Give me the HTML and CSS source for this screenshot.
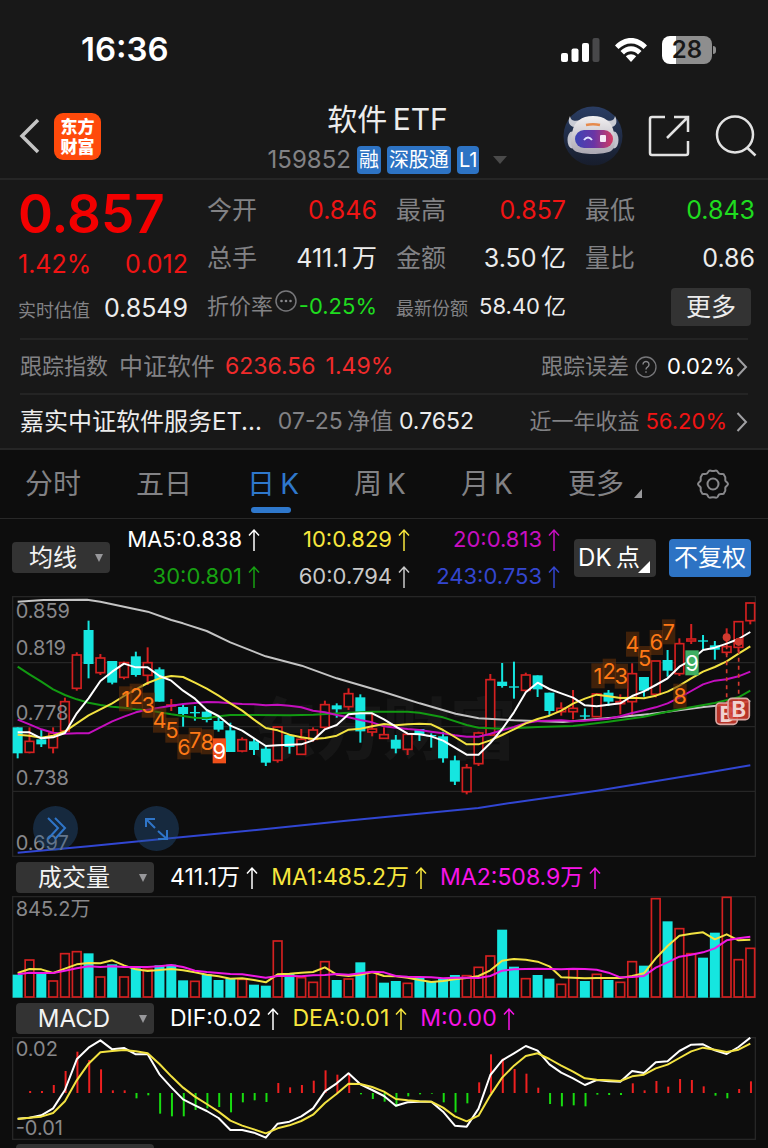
FILE: index.html
```html
<!DOCTYPE html>
<html lang="zh-CN">
<head>
<meta charset="utf-8">
<meta name="viewport" content="width=device-width, initial-scale=1">
<title>软件ETF 159852</title>
<link rel="stylesheet" href="styles.css">
</head>
<body>
<svg class="defs" aria-hidden="true">
  <symbol id="up" viewBox="0 0 12 24"><path d="M6 23V2M1 7.500L6 2l5 5.500" fill="none" stroke="currentColor" stroke-width="1.500"/></symbol>
  <symbol id="chevron" viewBox="0 0 12 22"><path d="M1.500 2L10 11l-8.500 9" fill="none" stroke="currentColor" stroke-width="2"/></symbol>
</svg>

<div class="top">
  <div class="status">
    <time>16:36</time>
    <div class="status-icons">
      <svg width="40" height="26" viewBox="0 0 40 26" aria-label="信号">
        <rect x="1" y="16" width="7" height="9" rx="2" fill="#fff"/><rect x="11.500" y="11.500" width="7" height="13.500" rx="2" fill="#fff"/><rect x="22" y="6" width="7" height="19" rx="2" fill="#fff"/><rect x="32.500" y="1" width="7" height="24" rx="2" fill="#48484a"/>
      </svg>
      <svg width="34" height="26" viewBox="0 0 34 26" aria-label="无线网络">
        <path d="M1 8.500C10 -1.500 24 -1.500 33 8.500L29.500 12C22.500 4.500 11.500 4.500 4.500 12Z" fill="#fff"/>
        <path d="M6.500 14C12.500 7.700 21.500 7.700 27.500 14L24 17.500C20 13.300 14 13.300 10 17.500Z" fill="#fff"/>
        <path d="M11.800 19.300C14.800 16.500 19.200 16.500 22.200 19.300L17 25Z" fill="#fff"/>
      </svg>
      <div class="battery"><span>28</span></div>
    </div>
  </div>

  <header class="header">
    <div class="header-left">
      <button class="icon-btn" aria-label="返回"><svg width="22" height="36" viewBox="0 0 22 36"><path d="M20 2L4 18l16 16" fill="none" stroke="#c4c4c4" stroke-width="3.500"/></svg></button>
      <div class="logo">东方<br>财富</div>
    </div>
    <div class="heading">
      <h1>软件&thinsp;ETF</h1>
      <div class="code-row"><span class="code">159852</span><span class="tag">融</span><span class="tag">深股通</span><span class="tag">L1</span><svg class="code-caret" width="14" height="8" viewBox="0 0 14 8"><path d="M0 0h14L7 8z" fill="#4a4a4a"/></svg></div>
    </div>
    <div class="header-right">
      <button class="icon-btn" aria-label="智能助手">
        <svg width="60" height="60" viewBox="0 0 60 60">
          <defs>
            <linearGradient id="disc" x1="0" y1="0" x2="0" y2="1"><stop offset="0" stop-color="#2a3d63"/><stop offset="1" stop-color="#171d2c"/></linearGradient>
            <linearGradient id="visor"><stop offset="0" stop-color="#3c45b5"/><stop offset=".5" stop-color="#6a35a5"/><stop offset="1" stop-color="#d53b62"/></linearGradient>
            <linearGradient id="shell" x1="0" y1="0" x2="0" y2="1"><stop offset="0" stop-color="#f2f0f1"/><stop offset="1" stop-color="#aaa7b2"/></linearGradient>
          </defs>
          <circle cx="30" cy="30" r="29.500" fill="url(#disc)"/>
          <path d="M15 20C9 23 3 18 7 10c1 6 6 5 11 4zM45 20c6 3 11-2 7-10-1 6-6 5-11 4z" fill="#c9cbd4"/>
          <ellipse cx="9" cy="34" rx="4.500" ry="8.500" fill="#c3c4ce"/><ellipse cx="51" cy="34" rx="4.500" ry="8.500" fill="#c3c4ce"/>
          <path d="M30 10c12 0 18 6 20 13 3 10 3 19-2 22-7 4-29 4-36 0-5-3-5-12-2-22 2-7 8-13 20-13z" fill="url(#shell)"/>
          <path d="M23 19q7-1.500 14 0" fill="none" stroke="#e68a4c" stroke-width="2.500"/>
          <rect x="12" y="24" width="38" height="18" rx="9" fill="url(#visor)"/>
          <path d="M21 34q4-5 8 0" fill="none" stroke="#dfe4ff" stroke-width="2"/>
          <rect x="37" y="29" width="6" height="7" rx="1" fill="#f6e9f5"/>
        </svg>
      </button>
      <button class="icon-btn" aria-label="分享"><svg width="42" height="42" viewBox="0 0 42 42"><path d="M17 2H4a2 2 0 0 0-2 2v34a2 2 0 0 0 2 2h34a2 2 0 0 0 2-2V26M26 2h14v15M40 2L19 23" fill="none" stroke="#e2e2e2" stroke-width="2.500"/></svg></button>
      <button class="icon-btn" aria-label="搜索"><svg width="42" height="42" viewBox="0 0 42 42"><circle cx="20" cy="19.500" r="18" fill="none" stroke="#e2e2e2" stroke-width="2.500"/><path d="M32.500 33l8 7.500" stroke="#e2e2e2" stroke-width="2.500"/></svg></button>
    </div>
  </header>

  <section class="quote">
    <div class="quote-col">
      <div class="price">0.857</div>
      <div class="pair main red"><span>1.42%</span><span>0.012</span></div>
      <div class="pair main"><span class="label small">实时估值</span><span>0.8549</span></div>
    </div>
    <div class="quote-col">
      <div class="pair"><span class="label">今开</span><span class="red">0.846</span></div>
      <div class="pair"><span class="label">总手</span><span>411.1&thinsp;万</span></div>
      <div class="pair"><span class="label mid">折价率<svg class="dots" width="22" height="22" viewBox="0 0 22 22"><circle cx="11" cy="11" r="10" fill="none" stroke="#77777a" stroke-width="1.500"/><circle cx="6.500" cy="11" r="1.300" fill="#88888b"/><circle cx="11" cy="11" r="1.300" fill="#88888b"/><circle cx="15.500" cy="11" r="1.300" fill="#88888b"/></svg></span><span class="green mid">-0.25%</span></div>
    </div>
    <div class="quote-col">
      <div class="pair"><span class="label">最高</span><span class="red">0.857</span></div>
      <div class="pair"><span class="label">金额</span><span>3.50&thinsp;亿</span></div>
      <div class="pair"><span class="label small">最新份额</span><span class="mid">58.40&thinsp;亿</span></div>
    </div>
    <div class="quote-col">
      <div class="pair"><span class="label">最低</span><span class="green">0.843</span></div>
      <div class="pair"><span class="label">量比</span><span>0.86</span></div>
      <div class="pair end"><button class="more">更多</button></div>
    </div>
  </section>

  <a class="line" href="#index">
    <span class="label">跟踪指数</span><span class="label name">中证软件</span><span class="rose num">6236.56</span><span class="rose num">1.49%</span>
    <span class="line-right"><span class="label">跟踪误差</span><svg class="help" width="22" height="22" viewBox="0 0 22 22"><circle cx="11" cy="11" r="10" fill="none" stroke="#77777a" stroke-width="1.300"/><path d="M8 8.500a3 3 0 1 1 4.500 2.600c-1 .6-1.500 1-1.500 2.400M11 15.200v1.600" fill="none" stroke="#88888b" stroke-width="1.400"/></svg><span>0.02%</span><svg class="chev" width="12" height="22"><use href="#chevron"/></svg></span>
  </a>
  <a class="line" href="#fund">
    <span class="name">嘉实中证软件服务ET...</span><span class="label nav">07-25&thinsp;净值</span><span class="nav-value">0.7652</span>
    <span class="line-right"><span class="label">近一年收益</span><span class="red gain">56.20%</span><svg class="chev far" width="12" height="22"><use href="#chevron"/></svg></span>
  </a>
</div>

<nav class="tabs">
  <button>分时</button><button>五日</button><button class="active">日&thinsp;K</button><button>周&thinsp;K</button><button>月&thinsp;K</button>
  <button class="tab-more">更多<svg width="8" height="9" viewBox="0 0 8 9"><path d="M8 0v9H0z" fill="#98989b"/></svg></button>
  <button aria-label="设置"><svg class="gear" width="32" height="32" viewBox="0 0 32 32" fill="none" stroke="#88888b" stroke-width="2"><path d="M11.500 3.500C12.500 1.500 13.500 3 16 3s3.500-1.500 4.500.5l1.500 2c1.500 1 3 .2 4.500.6l1.700 3c.4 1.500-.2 2.200.2 3.600.8 1.300 2.600 2 2.600 3.300s-1.800 2-2.600 3.300c-.4 1.400.2 2.100-.2 3.600l-1.700 3c-1.500.4-3-.4-4.500.6l-1.500 2.500c-1 1.500-2 .3-4.500.3s-3.500 1.200-4.500-.3L10 26.500c-1.500-1-3-.2-4.500-.6l-1.700-3c-.4-1.500.2-2.200-.2-3.600C2.800 18 1 17.300 1 16s1.800-2 2.600-3.300c.4-1.400-.2-2.100.2-3.600l1.700-3C7 5.700 8.500 6.500 10 5.500z"/><circle cx="16" cy="16" r="5.500"/></svg></button>
</nav>

<div class="ma-row">
  <label class="picker overlay-picker"><select aria-label="主图指标"><option>均线</option></select></label>
  <div class="ma-grid">
    <span class="c-white">MA5:0.838<svg class="up"><use href="#up"/></svg></span><span class="c-yellow">10:0.829<svg class="up"><use href="#up"/></svg></span><span class="c-purple">20:0.813<svg class="up"><use href="#up"/></svg></span>
    <span class="c-green">30:0.801<svg class="up"><use href="#up"/></svg></span><span class="c-grey">60:0.794<svg class="up"><use href="#up"/></svg></span><span class="c-blue">243:0.753<svg class="up"><use href="#up"/></svg></span>
  </div>
  <button class="dk">DK&thinsp;点<svg width="12" height="12" viewBox="0 0 12 12"><path d="M12 0v12H0z" fill="#fff"/></svg></button>
  <button class="adjust">不复权</button>
</div>

<main class="charts">
  <div class="chart-box">
    <svg id="kline" class="chart" viewBox="35 3 2232 783" role="img" aria-label="日K线"></svg>
    <div class="chart-tools">
      <button aria-label="展开"><svg width="45" height="45" viewBox="0 0 45 45"><path d="M15 12l10 10-10 11M22 12l10 10-10 11" fill="none" stroke="#2f75c8" stroke-width="2"/></svg></button>
      <button aria-label="全屏"><svg width="45" height="45" viewBox="0 0 45 45"><path d="M21 13h-9v8M12 13l9 9M24 25l9 8M33 24v9h-9" fill="none" stroke="#2f75c8" stroke-width="2"/></svg></button>
    </div>
  </div>
  <div class="panel-head">
    <label class="picker"><select aria-label="副图指标一"><option>成交量</option></select></label>
    <span class="c-white">411.1万<svg class="up"><use href="#up"/></svg></span><span class="c-yellow">MA1:485.2万<svg class="up"><use href="#up"/></svg></span><span class="c-magenta">MA2:508.9万<svg class="up"><use href="#up"/></svg></span>
  </div>
  <svg id="volume" class="chart" viewBox="35 108 2232 306" role="img" aria-label="成交量"></svg>
  <div class="panel-head">
    <label class="picker"><select aria-label="副图指标二"><option>MACD</option></select></label>
    <span class="c-white">DIF:0.02<svg class="up"><use href="#up"/></svg></span><span class="c-yellow">DEA:0.01<svg class="up"><use href="#up"/></svg></span><span class="c-magenta">M:0.00<svg class="up"><use href="#up"/></svg></span>
  </div>
  <svg id="macd" class="chart" viewBox="35 531 2232 309" role="img" aria-label="MACD"></svg>
  <div class="next-panel"></div>
</main>
<script src="chart.js"></script>
</body>
</html>
```

FILE: styles.css
```css
* { box-sizing: border-box; }
body {
  margin: 0;
  background: #0d0d0d;
  color: #ececec;
  font-family: Inter, "Noto Sans CJK SC", sans-serif;
  font-size: 22px;
  line-height: 1.25;
}
button, select { font: inherit; color: inherit; border: 0; padding: 0; background: none; }
a { color: inherit; text-decoration: none; }
svg { display: block; flex: none; }
.defs { position: absolute; width: 0; height: 0; }

.red { color: #f01414; }
.rose { color: #f02b2b; }
.green { color: #1fdc1f; }
.label { color: #828285; }
.c-white { color: #fff; }
.c-yellow { color: #f7e63e; }
.c-purple { color: #c80fc0; }
.c-magenta { color: #f814e8; }
.c-green { color: #17a012; }
.c-grey { color: #c9c9c9; }
.c-blue { color: #3446d0; }

.top { background: #181818; border-bottom: 2px solid #262626; }

.status {
  display: flex;
  justify-content: space-between;
  align-items: center;
  height: 100px;
  padding: 0 52px 0 81px;
}
.status time { font-size: 33px; font-weight: 600; color: #fff; }
.status-icons { display: flex; align-items: center; gap: 14px; }
.battery {
  position: relative;
  width: 50px;
  height: 28px;
  margin-right: 4px;
  border-radius: 8px;
  background: linear-gradient(90deg, #fff 28%, #8e8e8e 28%);
  color: #181818;
  font-size: 24px;
  font-weight: 600;
  line-height: 28px;
  text-align: center;
}
.battery::after {
  content: "";
  position: absolute;
  left: 51px;
  top: 10px;
  width: 3px;
  height: 8px;
  border-radius: 0 4px 4px 0;
  background: #8e8e8e;
}

.header {
  display: grid;
  grid-template-columns: 1fr auto 1fr;
  height: 80px;
  padding: 0 11px 0 18px;
  border-bottom: 2px solid #262626;
}
.header-left, .header-right { display: flex; align-items: center; padding-bottom: 10px; }
.header-left { gap: 14px; }
.header-right { justify-content: flex-end; gap: 25px; }
.icon-btn { display: block; }
.logo {
  width: 47px;
  height: 47px;
  padding-top: 4px;
  border-radius: 9px;
  background: #ff4a0b;
  color: #fff;
  font-size: 17px;
  font-weight: 900;
  line-height: 20px;
  text-align: center;
}
.heading { text-align: center; }
h1 { margin: 0; font-size: 30px; font-weight: 400; line-height: 38px; }
.code-row { display: flex; align-items: center; gap: 6px; height: 44px; color: #828285; }
.code { font-size: 24px; }
.tag {
  height: 28px;
  padding: 0 2px;
  border-radius: 4px;
  background: #2d73c4;
  color: #fff;
  font-size: 20px;
  line-height: 28px;
}
.code-caret { margin-left: 8px; }

.quote {
  display: grid;
  grid-template-columns: repeat(4, 1fr);
  gap: 19px;
  padding: 7px 13px 7px 18px;
  font-size: 25px;
}
.pair { display: flex; justify-content: space-between; align-items: center; height: 48px; white-space: nowrap; }
.pair.main { height: 44px; }
.pair.end { justify-content: flex-end; padding-right: 4px; }
.pair .small { font-size: 18px; padding-top: 5px; }
.pair .mid { font-size: 22px; }
.price { height: 56px; font-size: 53px; font-weight: 600; line-height: 54px; color: #f30000; }
.label.mid { display: flex; gap: 2px; }
.dots { margin-top: -3px; }
.more { width: 80px; height: 38px; border-radius: 4px; background: #333; font-size: 25px; line-height: 38px; }

.line {
  display: flex;
  align-items: center;
  height: 55px;
  margin: 0 20px;
  border-top: 2px solid #242424;
  white-space: nowrap;
}
.line .name { font-size: 24px; }
.label + .name { margin-left: 11px; }
.num { margin-left: 10px; font-size: 23px; }
.nav { margin-left: 16px; font-size: 23px; }
.nav-value { margin-left: 6px; font-size: 23px; }
.line-right { display: flex; align-items: center; margin-left: auto; color: #fff; }
.help { margin: 0 10px 0 6px; }
.gain { margin-left: 6px; color: #f01414; }
.chev { margin-left: 1px; color: #a0a0a3; }
.chev.far { margin-left: 9px; }

.tabs {
  display: flex;
  justify-content: space-between;
  align-items: center;
  height: 69px;
  padding: 0 39px 0 25px;
  border-bottom: 1px solid #282828;
  color: #828285;
  font-size: 28px;
}
.tabs button { position: relative; height: 68px; }
.tabs .active { color: #2f78cc; }
.tabs .active::after {
  content: "";
  position: absolute;
  left: 4px;
  bottom: 5px;
  width: 40px;
  height: 6px;
  border-radius: 3px;
  background: #2f78cc;
}
.tabs .tab-more { display: flex; align-items: center; gap: 10px; }
.tab-more svg { margin-top: 18px; }

.ma-row { display: flex; align-items: center; height: 77px; padding: 0 17px 0 12px; color: #fff; }
.picker { position: relative; display: block; width: 138px; height: 31px; border-radius: 4px; background: #333; }
.picker select {
  appearance: none;
  width: 100%;
  height: 100%;
  padding-right: 22px;
  color: #f2f2f2;
  font-size: 24px;
  text-align: center;
  text-align-last: center;
}
.picker::after {
  content: "";
  position: absolute;
  right: 7px;
  top: 12px;
  border: 4px solid transparent;
  border-top: 8px solid #98989b;
  border-bottom: 0;
}
.overlay-picker { width: 98px; }
.overlay-picker select { padding-right: 16px; }
.ma-grid { flex: 1; display: grid; grid-template-columns: repeat(3, 1fr); line-height: 37px; padding-top: 1px; }
.ma-grid span { display: flex; justify-content: flex-end; align-items: center; white-space: nowrap; }
.up { width: 12px; height: 24px; margin-left: 6px; }
.dk, .adjust { width: 82px; height: 38px; border-radius: 4px; background: #333; font-size: 24px; line-height: 38px; white-space: nowrap; }
.dk { position: relative; margin: 0 13px 0 14px; padding-right: 12px; }
.dk svg { position: absolute; right: 6px; bottom: 4px; }
.adjust { background: #2d73c4; }

.charts { padding: 0 12px; }
.chart { width: 100%; height: auto; }
.chart-box { position: relative; }
.chart-tools { position: absolute; left: 21px; bottom: 6px; display: flex; gap: 56px; }
.chart-tools button { border-radius: 50%; background: rgba(36, 87, 142, .38); }
.panel-head { display: flex; align-items: center; gap: 13px; height: 39px; padding: 2px 0 0 4px; font-size: 23px; white-space: nowrap; }
.panel-head span { display: flex; align-items: center; }
.panel-head .picker { margin-right: 3px; }
.next-panel { width: 138px; height: 4px; margin: 4px 0 0 4px; border-radius: 4px 4px 0 0; background: #333; }

.frame, .grid { fill: none; stroke: #262626; stroke-width: 4; }
.axis { fill: #88888b; font-size: 60px; }
.watermark { fill: #161616; font-size: 200px; font-weight: 900; }
.up-bar { fill: #0d0d0d; stroke: #d42020; stroke-width: 5; }
.up-wick { stroke: #d42020; stroke-width: 6; }
.down-bar { fill: #15e6e0; }
.down-wick { stroke: #15e6e0; stroke-width: 6; }
.curve { fill: none; stroke-width: 6; stroke-linejoin: round; }
.hist { stroke-width: 6; }
.count { fill: #ff7916; font-size: 66px; text-anchor: middle; }
.count-box { fill: #6b330a; fill-opacity: .55; }
.buy-box { fill: #cf3a2e; fill-opacity: .88; stroke: #d9a8a4; stroke-width: 5; }
.buy { fill: #f0d2d0; font-size: 66px; font-weight: 700; text-anchor: middle; }
```

FILE: chart.js
```js
const NS = 'http://www.w3.org/2000/svg';
const STEP = 35.45;
const xAt = i => 52 + STEP * i;

function add(parent, tag, attrs, text) {
  const node = document.createElementNS(NS, tag);
  for (const key in attrs) node.setAttribute(key, attrs[key]);
  if (text !== undefined) node.textContent = text;
  parent.appendChild(node);
}
function path(svg, points, color) {
  add(svg, 'polyline', { class: 'curve', stroke: color, points: points.map(p => p.join(',')).join(' ') });
}
function series(svg, values, color) {
  path(svg, values.map((v, i) => [xAt(i), v]), color);
}

// Candles: direction, high, body top, body bottom, low.
const candles = [
  ['D',397,397,475,490],['U',397,439,472,475],['D',403,433,448,456],['U',397,415,458,475],['U',308,320,408,410],
  ['U',172,180,280,287],['D',77,105,207,250],['U',177,189,233,240],['D',198,198,263,268],['U',200,203,247,253],
  ['D',170,184,240,245],['U',157,203,241,270],['D',217,223,320,320],['U',312,330,333,348],['D',330,336,357,395],
  ['D',333,351,355,377],['D',345,350,375,382],['D',365,378,404,410],['D',383,406,471,471],['U',427,434,468,472],
  ['D',430,439,465,480],['D',450,461,503,513],['U',395,396,496,503],['D',420,420,456,476],['U',402,433,478,478],
  ['U',397,405,433,440],['U',317,329,397,403],['D',325,331,343,368],['U',280,296,335,345],['D',298,307,409,443],
  ['U',357,402,411,424],['U',397,419,430,432],['D',420,434,461,475],['U',418,418,463,480],['D',402,402,419,438],
  ['D',415,420,424,458],['D',410,424,490,503],['D',482,496,560,570],['U',507,518,590,598],['U',410,414,506,513],
  ['U',237,254,420,423],['D',204,260,273,278],['D',200,274,278,311],['U',233,240,286,290],['D',241,241,283,306],
  ['D',293,293,348,360],['U',322,340,350,362],['U',285,340,350,373],['D',340,361,365,373],['U',296,297,365,365],
  ['D',285,293,320,333],['U',298,320,326,358],['U',205,236,320,362],['D',246,246,287,305],['U',198,198,298,307],
  ['D',165,195,227,245],['U',130,146,236,243],['U',87,132,138,147],['D',120,136,140,164],['D',138,151,164,194],
  ['U',100,155,172,180],['U',80,80,157,170],['U',23,24,77,88]
];
const ma5 = [412,412,430,427,414,355,310,258,230,206,217,217,243,257,287,311,345,363,392,407,430,453,451,449,448,436,403,390,358,355,355,373,395,416,418,424,437,458,479,479,444,402,352,292,263,282,295,308,331,334,329,325,303,289,270,250,215,195,165,158,146,132,111];
const ma10 = [419,422,428,422,409,385,361,343,325,303,283,264,250,243,246,263,281,302,325,347,374,399,406,419,427,432,429,422,404,401,394,387,391,388,386,388,405,426,448,448,436,420,403,385,372,362,347,326,311,299,304,309,308,310,302,290,272,250,230,216,199,176,154];
const ma20 = [374,388,403,413,416,415,415,397,379,365,352,344,338,332,327,324,321,322,325,327,328,331,329,332,337,347,352,360,367,375,382,394,398,402,405,410,415,421,425,425,416,406,396,384,378,377,376,379,377,374,371,364,354,346,337,325,308,288,268,257,253,244,230];
const ma30 = [[0,215],[1,238],[2,260],[3,283],[4,300],[5,313],[6,323],[7,330],[8,335],[9,338],[10,343],[11,346],[12,352],[13,358],[14,363],[15,368],[16,370],[17,364],[18,360],[20,360],[23,361],[25,359],[28,353],[30,350],[33,350],[34,353],[36,367],[38,390],[39,398],[41,401],[44,396],[47,393],[50,380],[53,365],[56,343],[59,324],[61,307],[62,287]];
const ma60 = [[52,20],[130,15],[260,14],[300,20],[442,50],[513,75],[548,85],[619,108],[690,142],[796,184],[904,212],[1009,250],[1150,291],[1258,325],[1366,356],[1435,370],[1541,376],[1688,381],[1860,366],[1950,357],[2110,336],[2210,326],[2250,318]];
const ma243 = [[52,773],[265,754],[478,733],[768,705],[1030,678],[1434,639],[1536,623],[1790,587],[2110,535],[2250,511]];

function drawKline() {
  const svg = document.getElementById('kline');
  add(svg, 'rect', { class: 'frame', x: 37, y: 5, width: 2228, height: 779 });
  add(svg, 'text', { class: 'watermark', x: 748, y: 478 }, '东方财富');
  for (const y of [203, 395, 589]) add(svg, 'path', { class: 'grid', d: `M37 ${y}H2265` });
  candles.forEach(([dir, high, top, bottom, low], i) => {
    const x = xAt(i), up = dir === 'U';
    add(svg, 'path', { class: up ? 'up-wick' : 'down-wick', d: `M${x} ${high}V${low}` });
    add(svg, 'rect', up
      ? { class: 'up-bar', x: x - 13, y: top, width: 26, height: bottom - top }
      : { class: 'down-bar', x: x - 15, y: top, width: 30, height: bottom - top });
  });
  path(svg, ma60, '#c4c4c4');
  path(svg, ma243, '#3146d2');
  path(svg, ma30.map(([i, y]) => [xAt(i), y]), '#129a12');
  series(svg, ma20, '#c40fbe');
  series(svg, ma10, '#f2e241');
  series(svg, ma5, '#ffffff');
  [[376,311,1],[408,303,2],[444,330,3],[478,375,4],[515,405,5],[551,455,6],[585,435,7],[621,440,8],[657,467,9,'#f0501a'],
   [1793,242,1],[1827,228,2],[1863,243,3],[1897,147,4],[1933,190,5],[1968,142,6],[2005,110,7],[2039,303,8],[2075,203,9,'#3fae63']
  ].forEach(([x, y, n, color]) => {
    add(svg, 'rect', { class: 'count-box', x: x - 20, y: y - 37, width: 40, height: 75, ...(color && { style: `fill:${color};fill-opacity:1` }) });
    add(svg, 'text', { class: 'count', x, y: y + 24, ...(color && { style: 'fill:#fff' }) }, n);
  });
  [[2179,127,356],[2215,140,342]].forEach(([x, dot, y]) => {
    add(svg, 'path', { d: `M${x} ${dot}V${y}`, stroke: '#d23a2f', 'stroke-width': 5, 'stroke-dasharray': '12 12' });
    add(svg, 'circle', { cx: x, cy: dot, r: 12, fill: '#d23a2f' });
    add(svg, 'rect', { class: 'buy-box', x: x - 32, y: y - 32, width: 64, height: 64, rx: 12 });
    add(svg, 'text', { class: 'buy', x, y: y + 24 }, 'B');
  });
  [['0.859',70],['0.819',181],['0.778',376],['0.738',571],['0.697',765]].forEach(([t, y]) =>
    add(svg, 'text', { class: 'axis', x: 46, y }, t));
}

const volume = [346,300,343,363,281,275,282,351,315,351,327,328,318,316,363,364,345,362,358,358,376,379,243,343,353,367,305,362,357,309,338,370,365,370,354,367,358,347,347,322,288,211,322,356,347,358,373,328,365,343,362,367,305,319,116,186,206,281,295,220,112,299,265];
const volumeDir = 'DUDUUUDUDUDUDDDUDDDUDDUDUUUDUDUDDUDDDDUUUDDUDDUUDUDUUDUDUUDDUUU';
const volMa1 = [339,327,328,339,326,313,309,310,301,316,328,333,330,327,331,337,344,349,356,355,360,367,343,341,338,336,322,344,348,344,336,348,349,353,360,366,363,358,354,348,331,302,297,299,305,319,352,353,355,354,354,354,348,340,295,258,227,221,217,238,223,241,239];
const volMa2 = [343,338,339,339,332,325,319,321,319,321,321,321,319,315,321,332,336,339,342,343,348,353,348,348,349,346,345,342,344,340,335,337,348,350,351,352,355,353,353,354,348,332,328,327,326,327,328,326,327,329,338,352,351,348,323,307,290,284,277,265,241,235,230];

function drawVolume() {
  const svg = document.getElementById('volume');
  add(svg, 'rect', { class: 'frame', x: 37, y: 110, width: 2228, height: 303 });
  volume.forEach((top, i) => {
    const x = xAt(i);
    add(svg, 'rect', (volumeDir[i] === 'U')
      ? { class: 'up-bar', x: x - 13, y: top, width: 26, height: 411 - top }
      : { class: 'down-bar', x: x - 15, y: top - 2, width: 30, height: 415 - top });
  });
  series(svg, volMa1, '#f2e241');
  series(svg, volMa2, '#f018e4');
  add(svg, 'text', { class: 'axis', x: 46, y: 168 }, '845.2万');
}

const hist = [699,693,693,675,633,575,600,628,691,691,715,706,761,769,769,750,745,741,757,727,721,726,669,682,675,662,631,644,644,703,717,725,740,709,703,701,727,757,730,667,583,596,627,641,683,732,739,736,739,704,705,705,670,691,663,680,657,660,679,707,715,687,664];
const dif = [776,773,766,745,690,598,563,541,568,564,583,583,643,682,718,736,753,774,810,810,818,833,791,785,769,745,694,670,640,673,690,708,737,727,725,725,755,797,800,746,645,601,580,558,572,613,638,655,675,660,664,665,633,639,607,604,573,554,553,571,582,561,533];
const dea = [777,773,770,759,724,661,611,577,573,570,574,580,612,649,683,710,732,755,782,797,808,820,805,796,783,764,729,701,671,672,681,695,717,721,724,725,743,769,784,767,706,653,617,588,580,597,617,635,655,659,661,663,649,644,625,614,594,574,563,569,576,569,551];

function drawMacd() {
  const svg = document.getElementById('macd');
  add(svg, 'rect', { class: 'frame', x: 37, y: 533, width: 2228, height: 305 });
  hist.forEach((y, i) =>
    add(svg, 'path', { class: 'hist', stroke: y < 699 ? '#ee2020' : '#18dc10', d: `M${xAt(i) + 2} 699V${y}` }));
  series(svg, dif, '#ffffff');
  series(svg, dea, '#f2e241');
  add(svg, 'text', { class: 'axis', x: 46, y: 589 }, '0.02');
  add(svg, 'text', { class: 'axis', x: 46, y: 825 }, '-0.01');
}

drawKline();
drawVolume();
drawMacd();
```
